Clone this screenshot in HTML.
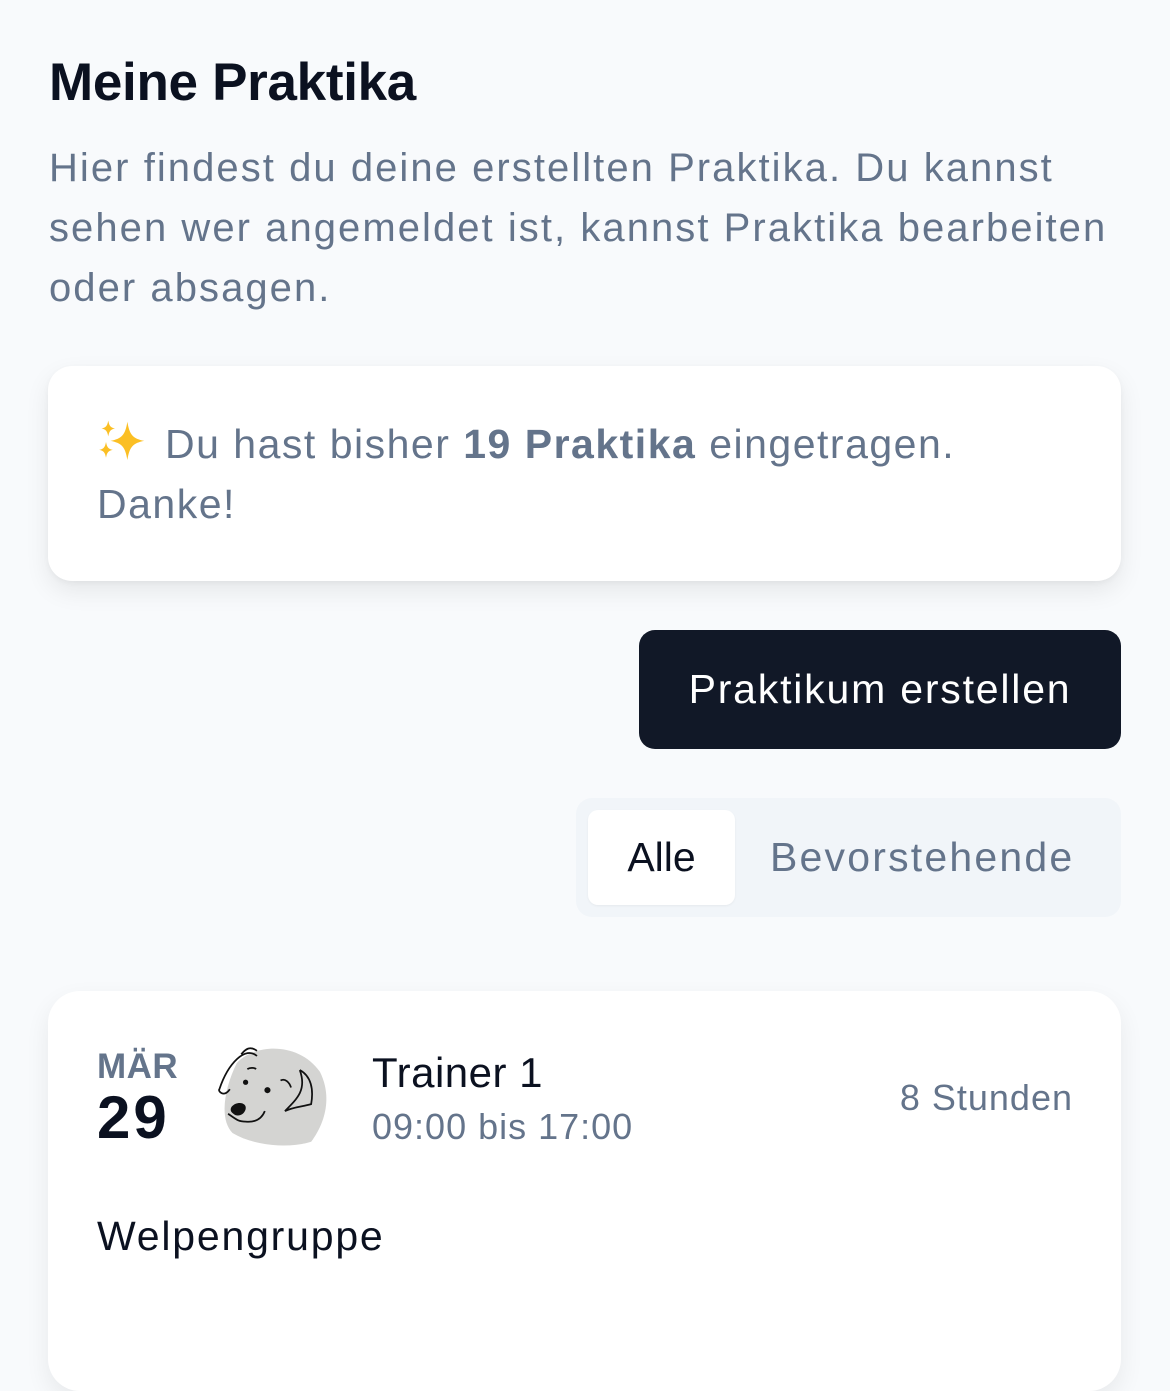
<!DOCTYPE html>
<html><head><meta charset="utf-8"><style>
*{margin:0;padding:0;box-sizing:border-box}
body{width:1170px;height:1296px;background:#f8fafc;font-family:"Liberation Sans",sans-serif;position:relative;overflow:hidden}
.abs{position:absolute;white-space:nowrap}
h1{position:absolute;left:49px;top:52px;font-size:53px;font-weight:bold;color:#0b1120;letter-spacing:-0.3px}
.intro{position:absolute;left:49px;top:138px;width:1110px;font-size:40px;line-height:60px;color:#64748b;letter-spacing:2.05px;white-space:nowrap}
.card{position:absolute;left:48px;top:366px;width:1073px;height:215px;background:#fff;border-radius:24px;box-shadow:0 10px 25px rgba(0,0,0,.08),0 2px 6px rgba(0,0,0,.04)}
.card .t{position:absolute;left:49px;top:48px;font-size:41px;line-height:60px;color:#64748b;letter-spacing:1.5px;white-space:nowrap}
.btn{position:absolute;left:639px;top:630px;width:482px;height:119px;background:#111827;border-radius:16px;color:#fff;font-size:41px;letter-spacing:1.8px;display:flex;align-items:center;justify-content:center}
.tabs{position:absolute;left:576px;top:798px;width:545px;height:119px;background:#f1f5f9;border-radius:16px}
.tab1{position:absolute;left:12px;top:12px;width:147px;height:95px;background:#fff;border-radius:10px;font-size:41px;color:#0b1120;display:flex;align-items:center;justify-content:center;box-shadow:0 1px 2px rgba(0,0,0,.05)}
.tab2{position:absolute;left:194px;top:36px;font-size:41px;color:#64748b;letter-spacing:2.2px}
.card2{position:absolute;left:48px;top:991px;width:1073px;height:400px;background:#fff;border-radius:32px;box-shadow:0 10px 25px rgba(0,0,0,.07)}
</style></head><body>
<h1>Meine Praktika</h1>
<div class="intro">Hier findest du deine erstellten Praktika. Du kannst<br>sehen wer angemeldet ist, kannst Praktika bearbeiten<br>oder absagen.</div>
<div class="card"><div class="t"><svg width="54" height="50" viewBox="0 0 48 44" style="vertical-align:-9px;margin-right:14px"><path fill="#fbbf24" d="M27 4C29 16 32 19 42 21 32 23 29 26 27 38 25 26 22 23 12 21 22 19 25 16 27 4Z"/><path fill="#fbbf24" d="M10 3C11 8 12 9 16 10 12 11 11 12 10 17 9 12 8 11 4 10 8 9 9 8 10 3Z"/><path fill="#fbbf24" d="M8 22C9 27 10 28 14 29 10 30 9 31 8 36 7 31 6 30 2 29 6 28 7 27 8 22Z"/></svg>Du hast bisher <b>19 Praktika</b> eingetragen.<br>Danke!</div></div>
<div class="btn">Praktikum erstellen</div>
<div class="tabs"><div class="tab1">Alle</div><div class="tab2">Bevorstehende</div></div>
<div class="card2">
<div class="abs" style="left:49px;top:56px;font-size:35px;font-weight:bold;color:#64748b;letter-spacing:0.5px">MÄR</div>
<div class="abs" style="left:49px;top:92px;font-size:60px;font-weight:bold;color:#0b1120;letter-spacing:3px">29</div>
<svg class="abs" style="left:167px;top:47px" width="118" height="120" viewBox="15 5 135 130">
<path fill="#d4d4d2" d="M40 30C60 8 110 5 135 40 150 70 140 100 125 120 100 128 60 125 35 110 20 95 25 60 40 30Z"/>
<path fill="none" stroke="#111" stroke-width="2" d="M63 22C50 10 30 30 20 60 18 62 25 70 32 60M63 16C55 10 50 14 45 20M112 38C120 60 110 70 95 85 105 80 115 80 125 77 128 60 125 45 112 38"/>
<path fill="none" stroke="#111" stroke-width="2" d="M90 50C95 47 100 52 102 58"/>
<path d="M52 37C55 35 60 35 62 37" stroke="#111" stroke-width="2" fill="none"/>
<circle cx="50" cy="52" r="3" fill="#111"/><circle cx="75" cy="61" r="3.5" fill="#111"/>
<path fill="#111" d="M34 80C40 73 52 75 50 83 48 90 40 92 36 88 33 86 32 83 34 80Z"/>
<path fill="none" stroke="#111" stroke-width="2" d="M30 88C40 95 42 97 50 97 60 98 68 95 72 85"/>
</svg>
<div class="abs" style="left:324px;top:58px;font-size:42px;color:#0b1120;letter-spacing:0.5px">Trainer 1</div>
<div class="abs" style="left:324px;top:115px;font-size:36px;color:#64748b;letter-spacing:1px">09:00 bis 17:00</div>
<div class="abs" style="right:48px;top:86px;font-size:36px;color:#64748b;letter-spacing:1px">8 Stunden</div>
<div class="abs" style="left:49px;top:222px;font-size:41px;color:#0b1120;letter-spacing:1.8px">Welpengruppe</div>
</div>
</body></html>
